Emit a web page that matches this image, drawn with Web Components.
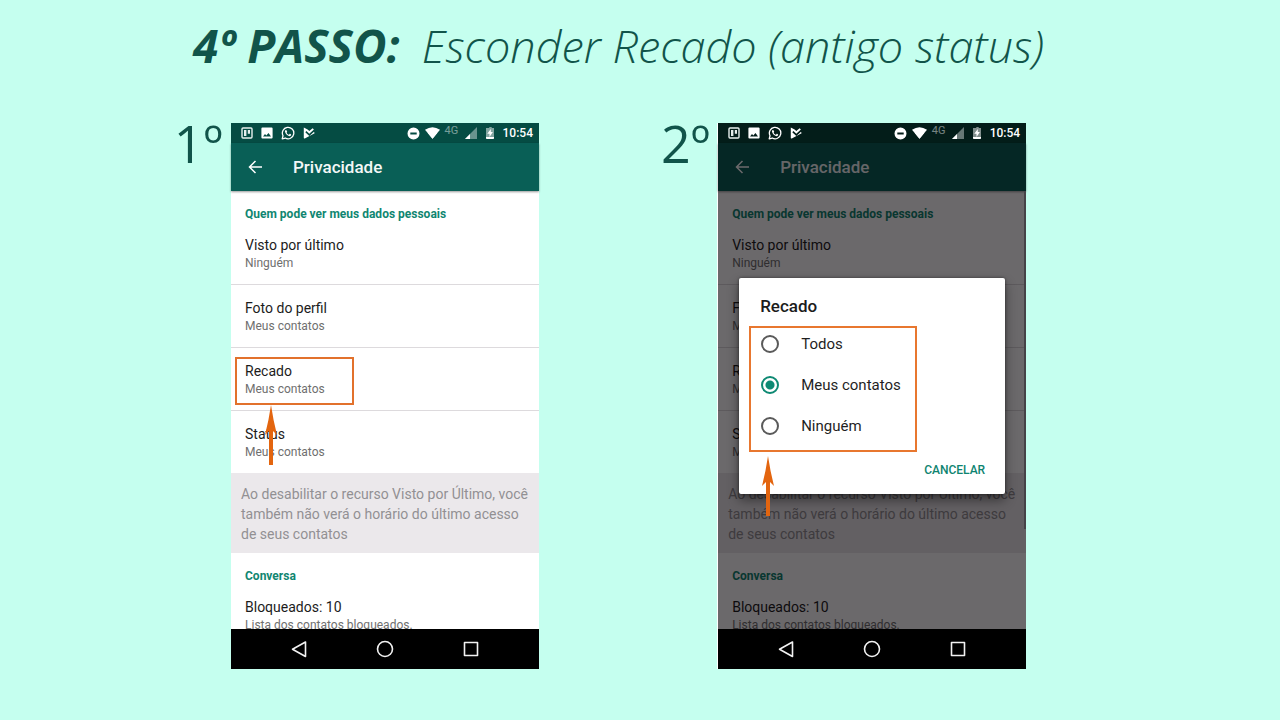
<!DOCTYPE html>
<html lang="pt-BR">
<head>
<meta charset="utf-8">
<meta name="viewport" content="width=device-width, initial-scale=1">
<title>Esconder Recado</title>
<style>
body { margin: 0; min-height: 100vh; background: #c5ffef; color: #11544a; font-family: "Open Sans", sans-serif; }
</style>
</head>
<body>
<tutorial-page>
  <slide-title slot="title" step="4º PASSO:">Esconder Recado (antigo status)</slide-title>
  <step-figure number="1º">
    <privacy-screen>
      <callout-mark slot="mark"></callout-mark>
    </privacy-screen>
  </step-figure>
  <step-figure number="2º">
    <privacy-screen dimmed>
      <choice-dialog slot="overlay" heading="Recado">
        <radio-option label="Todos"></radio-option>
        <radio-option label="Meus contatos" checked></radio-option>
        <radio-option label="Ninguém"></radio-option>
      </choice-dialog>
    </privacy-screen>
  </step-figure>
</tutorial-page>

<script>
function define(name, markup, ready) {
  const template = document.createElement('template');
  template.innerHTML = markup;
  customElements.define(name, class extends HTMLElement {
    connectedCallback() {
      if (this.shadowRoot) return;
      this.attachShadow({ mode: 'open' }).append(template.content.cloneNode(true));
      if (ready) ready(this, this.shadowRoot);
    }
  });
}

define('tutorial-page', `
<style>
:host { display: block; padding: 13px 0 50px; }
main { display: flex; flex-wrap: wrap; justify-content: center; gap: 48px 122px; margin-top: 45px; padding-right: 80px; }
</style>
<slot name="title"></slot>
<main><slot></slot></main>`);

define('slide-title', `
<style>
:host { display: block; padding-right: 43px; }
h1 { display: flex; flex-wrap: wrap; justify-content: center; align-items: baseline; gap: 0 22px; margin: 0; font-size: 46px; line-height: 64px; font-style: italic; font-weight: 300; }
strong { font-weight: 700; }
span { font-size: 45px; }
</style>
<h1><strong></strong><span><slot></slot></span></h1>`,
(el, root) => { root.querySelector('strong').textContent = el.getAttribute('step'); });

define('step-figure', `
<style>
:host { display: block; }
figure { display: flex; align-items: flex-start; gap: 8px; margin: 0; }
figcaption { min-width: 49px; font-size: 52px; line-height: 40px; text-align: right; }
</style>
<figure><figcaption></figcaption><slot></slot></figure>`,
(el, root) => { root.querySelector('figcaption').textContent = el.getAttribute('number'); });

define('status-bar', `
<style>
:host { display: flex; align-items: center; justify-content: space-between; height: 20px; padding: 0 6px 0 10px; background: #054c43; color: #fff; font: 500 12px/20px Roboto, sans-serif; }
:host([dimmed]) { background: #031d19; }
div { display: flex; align-items: center; }
.left { gap: 8px; }
.right { gap: 5px; }
svg { display: block; }
small { align-self: flex-start; min-width: 15px; font-size: 11px; line-height: 16px; font-weight: 400; opacity: .45; }
</style>
<div class="left">
  <svg width="12" height="12" viewBox="0 0 12 12"><rect x="1" y="1" width="10" height="10" rx="1" fill="none" stroke="#e7efed" stroke-width="1.4"/><path d="M3 3h2.4v6H3zM6.8 3H9v3.8H6.8z" fill="#e7efed"/></svg>
  <svg width="12" height="12" viewBox="0 0 12 12"><path fill="#fff" fill-rule="evenodd" d="M1.4.6h9.2q1 0 1 1v8.8q0 1-1 1H1.4q-1 0-1-1V1.6q0-1 1-1zM2 9.6h8L7.5 6 5.3 8.4 4 6.9z"/></svg>
  <svg width="14" height="14" viewBox="0 0 24 24"><path d="M2 22l1.5-5.3A9.8 9.8 0 1 1 7.3 20.600z" fill="none" stroke="#fff" stroke-width="2.2" stroke-linejoin="round"/><path fill="#fff" d="M8.500 6.700c-1.200.3-1.900 1.500-1.700 2.800.5 3.800 4 7.400 7.700 7.900 1.500.1 2.900-.8 3-2.300 0-.5-2.300-1.700-2.800-1.600-.4.1-.9 1.300-1.300 1.300-1.500-.5-3-1.900-3.700-3.400 0-.4 1-1 .9-1.500-.2-.8-1-3-2.100-3.200z"/></svg>
  <svg width="12" height="12" viewBox="0 0 12 12"><path fill="#fff" d="M.8.500L4.600 2.500 6.300 4.100 9.600 1.200l1.300 1.300-4.600 4.200L3.400 4 2.300 5.200l4 3.700L11 4.700l.6 1.500L1.800 11.500Q.8 11.900.8 10.800z"/></svg>
</div>
<div class="right">
  <svg width="13" height="13" viewBox="0 0 13 13"><path fill="#fff" fill-rule="evenodd" d="M6.500.500a6 6 0 1 1 0 12 6 6 0 0 1 0-12zM3.300 5.600v1.800h6.400V5.600z"/></svg>
  <svg width="15" height="12" viewBox="0 0 15 12"><path class="wifi" fill="#fff" d="M0 2.800Q7.500-2.400 15 2.800L7.500 11.800z"/><path fill="#fff" d="M2.800 6Q7.500 2.700 12.200 6L7.500 11.800z"/></svg>
  <small>4G</small>
  <svg width="12" height="12" viewBox="0 0 12 12"><path fill="#fff" opacity=".4" d="M12 0v12H0z"/><path fill="#fff" d="M5 7v5H0z"/></svg>
  <svg width="16" height="12" viewBox="0 0 16 12"><path fill="#fff" opacity=".5" d="M6 1h1.300V0h2.400v1H12v9H4V1z"/><path fill="#fff" d="M4 10h8v1.200q0 .8-.8.8H4.800Q4 12 4 11.200z"/><path fill="#fff" d="M8.800 2L5.300 6.700h2.200V10l3.400-4.900H8.800z"/></svg>
  <time>10:54</time>
</div>`,
(el, root) => { if (el.hasAttribute('dimmed')) root.querySelector('.wifi').setAttribute('opacity', '.45'); });

define('app-bar', `
<style>
:host { display: flex; align-items: center; gap: 28px; position: relative; height: 48px; padding-left: 14px; background: #095f56; color: #fff; box-shadow: 0 1px 2px rgba(0,0,0,.4); }
button { padding: 0; border: 0; background: none; color: inherit; }
svg { display: block; }
h2 { margin: 0; font: 500 17px/24px Roboto, sans-serif; color: #f3f8f7; }
</style>
<button type="button" aria-label="Voltar"><svg width="20" height="20" viewBox="0 0 20 20" fill="none" stroke="#fff" stroke-width="1.5"><path d="M17 10H5M10.500 4L4.500 10l6 6"/></svg></button>
<h2>Privacidade</h2>`);

define('section-heading', `
<style>
:host { display: block; padding: 15px 14px 0; }
h3 { margin: 0; font: 700 12px/16px Roboto, sans-serif; color: #108671; }
</style>
<h3><slot></slot></h3>`);

define('setting-row', `
<style>
:host { display: block; position: relative; padding: 14px 14px 12px; border-bottom: 1px solid #dddadd; font-family: Roboto, sans-serif; white-space: nowrap; }
:host([last]) { border-bottom: 0; }
strong { display: block; font-size: 14px; line-height: 18px; font-weight: 400; color: #1c1c1c; }
span { display: block; font-size: 12px; line-height: 18px; color: #6f6f6f; }
</style>
<strong></strong><span></span><slot></slot>`,
(el, root) => {
  root.querySelector('strong').textContent = el.getAttribute('label');
  root.querySelector('span').textContent = el.getAttribute('value');
});

define('nav-bar', `
<style>
:host { display: flex; justify-content: center; height: 40px; background: #000; }
button { display: grid; place-items: center; width: 86px; padding: 0; border: 0; background: none; }
svg { display: block; fill: none; stroke: #f2f2f2; stroke-width: 1.6; stroke-linejoin: round; }
</style>
<button type="button" aria-label="Voltar"><svg width="18" height="18" viewBox="0 0 18 18"><path d="M15.500 2v14.500L2.500 9.200z"/></svg></button>
<button type="button" aria-label="Início"><svg width="18" height="18" viewBox="0 0 18 18"><circle cx="9" cy="9" r="7.500"/></svg></button>
<button type="button" aria-label="Recentes"><svg width="18" height="18" viewBox="0 0 18 18"><path d="M2.500 2.500h13v13h-13z"/></svg></button>`);

define('privacy-screen', `
<style>
:host { display: flex; flex-direction: column; width: 308px; height: 546px; background: #fff; }
:host([dimmed]) { box-shadow: -1px 0 #fff; }
.screen { flex: 1; display: flex; flex-direction: column; position: relative; min-height: 0; }
.content { flex: 1; min-height: 0; overflow: hidden; }
section-heading { height: 16px; }
p { margin: 0; padding: 11px 8px 9px 10px; background: #ebe8eb; color: #929093; font: 400 14px/20px Roboto, sans-serif; }
.scrim { display: none; }
:host([dimmed]) .scrim { display: flex; align-items: center; justify-content: center; position: absolute; inset: 0; background: rgba(3,0,4,.59); }
.scrollbar { position: absolute; top: 48px; right: 0; width: 2px; height: 338px; background: #464348; }
</style>
<status-bar></status-bar>
<div class="screen">
  <app-bar></app-bar>
  <div class="content">
    <section-heading>Quem pode ver meus dados pessoais</section-heading>
    <setting-row label="Visto por último" value="Ninguém"></setting-row>
    <setting-row label="Foto do perfil" value="Meus contatos"></setting-row>
    <setting-row label="Recado" value="Meus contatos"><slot name="mark"></slot></setting-row>
    <setting-row label="Status" value="Meus contatos" last></setting-row>
    <p>Ao desabilitar o recurso Visto por Último, você também não verá o horário do último acesso de seus contatos</p>
    <section-heading>Conversa</section-heading>
    <setting-row label="Bloqueados: 10" value="Lista dos contatos bloqueados."></setting-row>
  </div>
  <div class="scrim"><div class="scrollbar"></div><slot name="overlay"></slot></div>
</div>
<nav-bar></nav-bar>`,
(el, root) => { if (el.hasAttribute('dimmed')) root.querySelector('status-bar').toggleAttribute('dimmed', true); });

define('pointer-arrow', `
<style>
:host { display: block; }
svg { display: block; }
</style>
<svg width="12" height="60" viewBox="0 0 12 60" fill="#e3650f"><path d="M6 0Q8 14 12 30L8 26V60H4V26L0 30Q4 14 6 0z"/></svg>`);

define('callout-mark', `
<style>
:host { position: absolute; z-index: 1; left: 4px; top: 9px; width: 119px; height: 48px; box-sizing: border-box; border: 2px solid #e2712c; }
pointer-arrow { position: absolute; left: 28px; top: 46px; }
</style>
<pointer-arrow></pointer-arrow>`);

define('radio-option', `
<style>
:host { display: block; }
label { display: flex; align-items: center; gap: 22px; height: 18px; font: 400 15px/18px Roboto, sans-serif; color: #1f1f1f; }
input { appearance: none; box-sizing: border-box; width: 18px; height: 18px; margin: 0; border: 2px solid #5a5a5a; border-radius: 50%; }
input:checked { border-color: #0e8973; background: radial-gradient(circle, #0e8973 4px, transparent 5px); }
</style>
<label><input type="radio" name="recado"><span></span></label>`,
(el, root) => {
  root.querySelector('span').textContent = el.getAttribute('label');
  root.querySelector('input').checked = el.hasAttribute('checked');
});

define('choice-dialog', `
<style>
:host { display: block; position: relative; width: 266px; box-sizing: border-box; padding: 16px 20px 16px 10px; border-radius: 2px; background: #fff; box-shadow: 0 6px 12px rgba(0,0,0,.45), 0 0 3px rgba(0,0,0,.5); font-family: Roboto, sans-serif; }
h2 { margin: 0 0 8px; padding-left: 11px; font-size: 17px; line-height: 24px; font-weight: 500; color: #1c1c1c; }
fieldset { display: grid; gap: 23px; width: 168px; box-sizing: border-box; margin: 0; padding: 7px 8px 15px 10px; border: 2px solid #e8772f; }
button { display: block; margin: 10px 0 0 auto; padding: 0; border: 0; background: none; font: 500 12px/16px Roboto, sans-serif; color: #0e8470; }
pointer-arrow { position: absolute; left: 23px; top: 178px; }
</style>
<h2></h2>
<fieldset aria-label="Recado"><slot></slot></fieldset>
<button type="button">CANCELAR</button>
<pointer-arrow></pointer-arrow>`,
(el, root) => { root.querySelector('h2').textContent = el.getAttribute('heading'); });
</script>
</body>
</html>
